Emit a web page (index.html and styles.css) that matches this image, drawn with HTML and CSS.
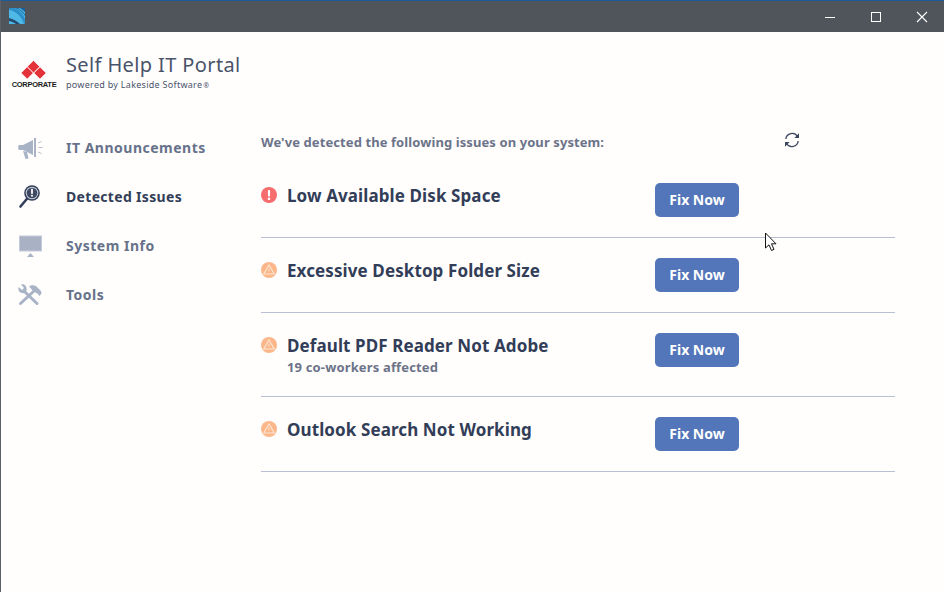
FILE: index.html
```html
<!DOCTYPE html>
<html lang="en">
<head>
<meta charset="utf-8">
<title>Self Help IT Portal</title>
<link rel="stylesheet" href="styles.css">
</head>
<body>
<div class="window">
  <header class="titlebar">
    <svg class="app-icon" viewBox="0 0 16 16" width="16" height="16">
      <rect width="16" height="16" fill="#4fb9e6"/>
      <path d="M0 0H5C9 1 14 5 16 11V16H15C13 9 7 3 0 2Z" fill="#2c8fc9"/>
      <path d="M6 0H16V8C14 4 10 1 6 0Z" fill="#17609c"/>
      <path d="M9 0.800C12 2 14.500 4 16 6.500V4C14.500 2.500 12.500 1 10.500 0Z" fill="#4fb9e6"/>
      <path d="M0 10C4 11 8 13 11 16H7C5 14.500 3 13.500 0 13Z" fill="#25486e"/>
    </svg>
    <div class="win-controls">
      <svg viewBox="0 0 12 12" width="12" height="12"><path d="M1 6.500H11" stroke="#fff" stroke-width="1"/></svg>
      <svg viewBox="0 0 12 12" width="12" height="12"><rect x="1.500" y="1.500" width="9" height="9" fill="none" stroke="#fff" stroke-width="1"/></svg>
      <svg viewBox="0 0 12 12" width="12" height="12"><path d="M1 1L11 11M11 1L1 11" stroke="#fff" stroke-width="1.100"/></svg>
    </div>
  </header>

  <div class="brand">
    <div class="logo">
      <svg viewBox="0 0 26 20" width="26" height="20">
        <path d="M12.500 0.500L18.700 6.700 12.500 12.900 6.300 6.700Z M6.200 6.800L12.300 12.900 6.200 19 0.100 12.900Z M19 7L25.100 13 19 19.100 12.900 13Z" fill="#e53238" stroke="#fffefd" stroke-width="0.600"/>
      </svg>
      <span class="logo-text">CORPORATE</span>
    </div>
    <div class="brand-text">
      <div class="brand-title">Self Help IT Portal</div>
      <div class="brand-sub">powered by Lakeside Software<span class="reg">®</span></div>
    </div>
  </div>

  <div class="content">
    <nav class="nav">
      <a class="nav-item">
        <svg class="nav-icon" viewBox="0 0 26 24" width="26" height="24">
          <path d="M2 9H6L16 4V19L6 14H2C1 14 1 9 2 9Z" fill="#a9b3c6"/>
          <path d="M17 2H19V21H17Z" fill="#a9b3c6"/>
          <path d="M6 15L10 16 11.500 22.500 8.500 23Z" fill="#a9b3c6"/>
          <path d="M21 7L24.500 5.500M21.500 11.500H25.500M21 16L24.500 17.500" stroke="#b5bdcd" stroke-width="1" fill="none"/>
        </svg>
        <span>IT Announcements</span>
      </a>
      <a class="nav-item active">
        <svg class="nav-icon" viewBox="0 0 26 26" width="26" height="26">
          <circle cx="15" cy="9" r="7.800" fill="#333e58"/>
          <circle cx="15" cy="9" r="6.300" fill="#c9cedb"/>
          <circle cx="15" cy="9" r="5.300" fill="#3f4962"/>
          <rect x="14.100" y="4.800" width="1.800" height="5" fill="#fff"/>
          <rect x="14.100" y="10.800" width="1.800" height="1.800" fill="#fff"/>
          <path d="M9.800 15L3.500 22.500" stroke="#333e58" stroke-width="2.600" stroke-linecap="round"/>
        </svg>
        <span>Detected Issues</span>
      </a>
      <a class="nav-item">
        <svg class="nav-icon" viewBox="0 0 26 24" width="26" height="24">
          <rect x="2.500" y="2" width="22" height="15" fill="#a9b2c5" stroke="#c3cad9"/>
          <path d="M13.500 19L17 23H10Z" fill="#a9b3c6"/>
        </svg>
        <span>System Info</span>
      </a>
      <a class="nav-item">
        <svg class="nav-icon" viewBox="0 0 26 24" width="26" height="24">
          <path d="M3.500 20.500L17.500 7.500" stroke="#a9b3c6" stroke-width="3" stroke-linecap="round"/>
          <path d="M12 3.500L15 2 19 3 24 8 24.500 10.500 22.500 13 20.500 10.500 16.500 8.500Z" fill="#a9b3c6"/>
          <path d="M8 9L20 20.500" stroke="#a9b3c6" stroke-width="3" stroke-linecap="round"/>
          <path d="M1.500 4L5 7 7 5 4 1.500C7 0.500 10.500 3 9.500 7.500L7.500 10C4 11 0.500 8 1.500 4Z" fill="#a9b3c6"/>
        </svg>
        <span>Tools</span>
      </a>
    </nav>

    <main class="main">
      <div class="main-head">
        <h2 class="intro">We've detected the following issues on your system:</h2>
        <svg class="refresh" viewBox="0 0 16 16" width="16" height="16" fill="none" stroke="#3a4560" stroke-width="1.300">
          <path d="M1.800 7A6.300 6.300 0 0 1 13.500 4.500"/>
          <path d="M14.200 9A6.300 6.300 0 0 1 2.500 11.500"/>
          <path d="M15 1.200V6H10.400Z M1 14.800V10H5.600Z" fill="#3a4560" stroke="none"/>
        </svg>
      </div>

      <section class="issue">
        <svg class="status" viewBox="0 0 16 16" width="16" height="16">
          <circle cx="8" cy="8" r="8" fill="#f76c6c"/>
          <rect x="6.900" y="3" width="2.200" height="6.500" rx="1" fill="#fff"/>
          <circle cx="8" cy="11.800" r="1.300" fill="#fff"/>
        </svg>
        <div class="issue-text"><h3>Low Available Disk Space</h3></div>
        <button class="fix">Fix Now</button>
      </section>

      <section class="issue">
        <svg class="status" viewBox="0 0 16 16" width="16" height="16">
          <circle cx="8" cy="8" r="8" fill="#fbb78a"/>
          <path d="M8 3L13.300 12H2.700Z" fill="none" stroke="#fde6d6" stroke-width="1.100"/>
          <path d="M8 6.500V9.500" stroke="#fde6d6" stroke-width="1"/>
        </svg>
        <div class="issue-text"><h3>Excessive Desktop Folder Size</h3></div>
        <button class="fix">Fix Now</button>
      </section>

      <section class="issue tall">
        <svg class="status" viewBox="0 0 16 16" width="16" height="16">
          <circle cx="8" cy="8" r="8" fill="#fbb78a"/>
          <path d="M8 3L13.300 12H2.700Z" fill="none" stroke="#fde6d6" stroke-width="1.100"/>
          <path d="M8 6.500V9.500" stroke="#fde6d6" stroke-width="1"/>
        </svg>
        <div class="issue-text"><h3>Default PDF Reader Not Adobe</h3><p>19 co-workers affected</p></div>
        <button class="fix">Fix Now</button>
      </section>

      <section class="issue">
        <svg class="status" viewBox="0 0 16 16" width="16" height="16">
          <circle cx="8" cy="8" r="8" fill="#fbb78a"/>
          <path d="M8 3L13.300 12H2.700Z" fill="none" stroke="#fde6d6" stroke-width="1.100"/>
          <path d="M8 6.500V9.500" stroke="#fde6d6" stroke-width="1"/>
        </svg>
        <div class="issue-text"><h3>Outlook Search Not Working</h3></div>
        <button class="fix">Fix Now</button>
      </section>
    </main>
  </div>

  <svg class="cursor" viewBox="0 0 16 22" width="16" height="22">
    <path d="M1.500 1V16L5 12.800 7.500 18.500 10 17.400 7.500 11.800H12Z" fill="#fff" stroke="#111" stroke-width="1"/>
  </svg>
</div>
</body>
</html>
```

FILE: styles.css
```css
* { box-sizing: border-box; }
html, body { margin: 0; height: 100%; }
body {
  font-family: "Noto Sans", "Open Sans", sans-serif;
  background: #fffefd;
  overflow: hidden;
}
.window {
  position: relative;
  width: 944px;
  height: 592px;
  border-left: 1px solid #5b606b;
}
.titlebar {
  height: 32px;
  background: #50555c;
  border-top: 1px solid #1d5a9c;
  display: flex;
  align-items: center;
  justify-content: space-between;
  padding: 0 16px 0 8px;
}
.app-icon { display: block; margin-top: -1px; }
.win-controls { display: flex; gap: 34px; }
.win-controls svg { display: block; }

.brand {
  display: flex;
  align-items: flex-start;
  height: 74px;
  padding: 21px 0 0 12px;
}
.logo {
  width: 42px;
  margin-right: 11px;
  display: flex;
  flex-direction: column;
  align-items: center;
  padding-top: 7px;
}
.logo svg { display: block; }
.logo-text {
  font-family: "Liberation Sans", sans-serif;
  font-size: 7.5px;
  line-height: 9px;
  font-weight: 700;
  color: #1c1c1c;
  letter-spacing: -0.3px;
  white-space: nowrap;
}
.brand-title {
  font-size: 20px;
  line-height: 24px;
  color: #49536a;
  letter-spacing: 0.38px;
}
.brand-sub {
  font-size: 9px;
  line-height: 14px;
  color: #49536a;
  letter-spacing: 0.28px;
  margin-top: 1px;
}
.reg { font-size: 7px; margin-left: 1px; }

.content { display: flex; }
.nav {
  width: 260px;
  padding-top: 17px;
  display: flex;
  flex-direction: column;
}
.nav-item {
  height: 49px;
  display: flex;
  align-items: center;
  padding-left: 16px;
  font-size: 14px;
  font-weight: 700;
  color: #67728a;
  letter-spacing: 0.5px;
}
.nav-item.active { color: #333e58; letter-spacing: 0.32px; }
.nav-icon { display: block; margin-right: 23px; flex: none; }

.main { width: 634px; }
.main-head {
  display: flex;
  align-items: flex-start;
  height: 57px;
  padding-top: 26px;
}
.intro {
  margin: 0;
  width: 523px;
  font-size: 13px;
  line-height: 20px;
  font-weight: 700;
  letter-spacing: 0.09px;
  color: #6c7389;
}
.refresh { display: block; }
.issue {
  display: flex;
  align-items: flex-start;
  padding: 20px 0;
  height: 75px;
  border-bottom: 1px solid #b9c0d3;
}
.issue.tall { height: 84px; }
.status { flex: none; display: block; margin: 4px 10px 0 0; }
.issue-text { width: 368px; }
.issue-text h3 {
  margin: 0;
  font-size: 17px;
  line-height: 26px;
  font-weight: 700;
  letter-spacing: 0.1px;
  color: #323d58;
}
.issue-text p {
  margin: -1px 0 0;
  font-size: 13px;
  line-height: 18px;
  font-weight: 700;
  letter-spacing: 0.15px;
  color: #6c7389;
}
.fix {
  width: 84px;
  height: 34px;
  border: 0;
  border-radius: 5px;
  background: #5276b9;
  color: #fff;
  font: 700 14px/34px "Noto Sans", "Open Sans", sans-serif;
  padding: 0;
}
.cursor {
  position: absolute;
  left: 763px;
  top: 232px;
}
```
